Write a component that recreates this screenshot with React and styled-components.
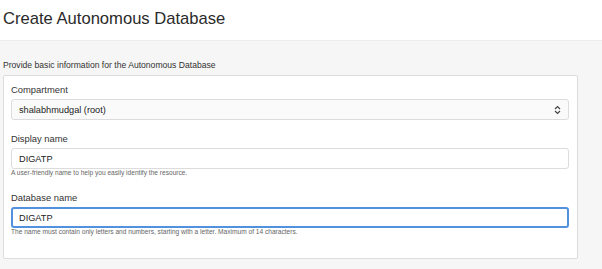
import React from "react";
import styled, { createGlobalStyle } from "styled-components";

const Global = createGlobalStyle`
  html, body { margin: 0; padding: 0; background: #f6f6f6; }
  body { font-family: "Liberation Sans", Arial, sans-serif; color: #333; }
`;

const Page = styled.div`
  width: 602px;
  height: 269px;
  background: #f6f6f6;
  overflow: hidden;
`;

const Header = styled.header`
  height: 41px;
  background: #ffffff;
  border-bottom: 1px solid #ededed;
  box-sizing: border-box;
  padding: 9px 0 0 3px;
`;

const Title = styled.h1`
  margin: 0;
  font-size: 16.6px;
  line-height: 20px;
  font-weight: 400;
  color: #2a2a2a;
`;

const Body = styled.div`
  padding: 19px 24px 0 3px;
`;

const Intro = styled.p`
  margin: 0 0 5px 0;
  font-size: 8.6px;
  color: #333;
`;

const Card = styled.section`
  background: #fff;
  border: 1px solid #dcdcdc;
  border-radius: 2px;
  height: 184px;
  box-sizing: border-box;
  padding: 8px 8px 0 7px;
  display: flex;
  flex-direction: column;
`;

const Field = styled.div`
  display: flex;
  flex-direction: column;
  margin-bottom: ${(p) => p.$gap}px;
`;

const Label = styled.label`
  font-size: 9.4px;
  color: #333;
  line-height: 12px;
  margin-bottom: 3px;
`;

const Box = styled.div`
  height: 21px;
  box-sizing: border-box;
  border: ${(p) => (p.$focus ? "2px solid #5191de" : "1px solid #dcdcdc")};
  border-radius: 3px;
  background: ${(p) => (p.$select ? "#fafafa" : "#fff")};
  display: flex;
  align-items: center;
  justify-content: space-between;
  padding: 0 ${(p) => (p.$focus ? 6 : 7)}px;
  font-size: 9.2px;
  color: #222;
`;

const Help = styled.div`
  font-size: 6.6px;
  color: #666;
  line-height: 8px;
`;

const Chevrons = () => (
  <svg width="7" height="10" viewBox="0 0 7 10" fill="none" stroke="#444" strokeWidth="1.2">
    <path d="M1 4 L3.5 1.5 L6 4" />
    <path d="M1 6 L3.5 8.5 L6 6" />
  </svg>
);

export default function App() {
  return (
    <Page>
      <Global />
      <Header>
        <Title>Create Autonomous Database</Title>
      </Header>
      <Body>
        <Intro>Provide basic information for the Autonomous Database</Intro>
        <Card>
          <Field $gap={13}>
            <Label>Compartment</Label>
            <Box $select>
              <span>shalabhmudgal (root)</span>
              <Chevrons />
            </Box>
          </Field>
          <Field $gap={15}>
            <Label>Display name</Label>
            <Box>DIGATP</Box>
            <Help>A user-friendly name to help you easily identify the resource.</Help>
          </Field>
          <Field $gap={0}>
            <Label>Database name</Label>
            <Box $focus>DIGATP</Box>
            <Help>The name must contain only letters and numbers, starting with a letter. Maximum of 14 characters.</Help>
          </Field>
        </Card>
      </Body>
    </Page>
  );
}
